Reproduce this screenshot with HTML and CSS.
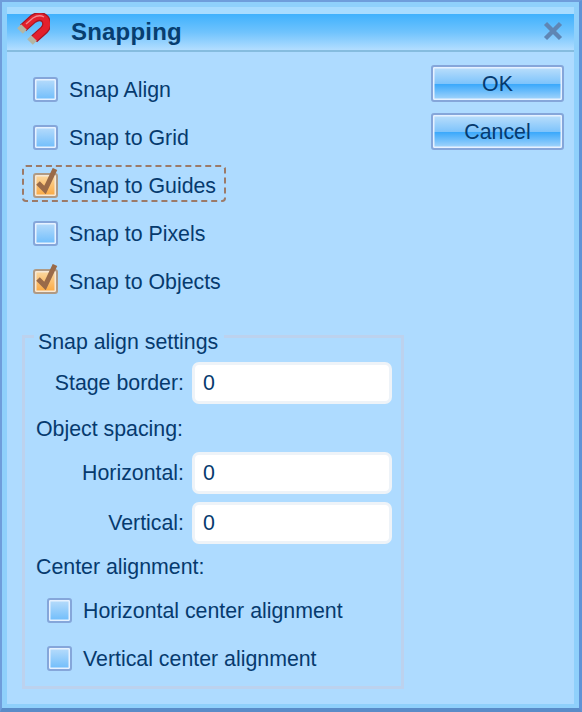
FILE: index.html
```html
<!DOCTYPE html>
<html lang="en">
<head>
<meta charset="utf-8">
<title>Snapping</title>
<link rel="stylesheet" href="styles.css">
</head>
<body>
<div class="window">
  <header class="titlebar">
    <svg class="magnet" width="34" height="34" viewBox="0 0 34 34">
      <path d="M7 15 L17 6 Q24 1 29 6 Q33 12 28 17 L18 26" fill="none" stroke="#a81522" stroke-width="9"/>
      <path d="M7 15 L17 6 Q24 1 29 6 Q33 12 28 17 L18 26" fill="none" stroke="#e3202c" stroke-width="6.5"/>
      <path d="M10 11 L17 5 Q23 1 28 4" fill="none" stroke="#ef8a90" stroke-width="1.4"/>
      <path d="M4 18 L8 14" stroke="#b3b6a4" stroke-width="8"/>
      <path d="M14 29 L18 25" stroke="#b3b6a4" stroke-width="8"/>
    </svg>
    <h1 class="title">Snapping</h1>
    <svg class="close" width="20" height="20" viewBox="0 0 20 20">
      <path d="M2.5 2.5 L17.5 17.5 M17.5 2.5 L2.5 17.5" stroke="#5f86b4" stroke-width="4.4"/>
    </svg>
  </header>
  <main class="body">
    <div class="top">
      <div class="checks">
        <label class="check"><span class="box"></span>Snap Align</label>
        <label class="check"><span class="box"></span>Snap to Grid</label>
        <label class="check focus"><span class="box on"><svg class="tick" width="22" height="26" viewBox="0 0 22 26"><path d="M2 15 L9 22 L19 1" fill="none" stroke="#9a6a48" stroke-width="5"/></svg></span>Snap to Guides</label>
        <label class="check"><span class="box"></span>Snap to Pixels</label>
        <label class="check"><span class="box on"><svg class="tick" width="22" height="26" viewBox="0 0 22 26"><path d="M2 15 L9 22 L19 1" fill="none" stroke="#9a6a48" stroke-width="5"/></svg></span>Snap to Objects</label>
      </div>
      <div class="buttons">
        <button class="btn" type="button">OK</button>
        <button class="btn" type="button">Cancel</button>
      </div>
    </div>
    <fieldset class="group">
      <legend class="legend">Snap align settings</legend>
      <div class="field first"><span class="label">Stage border:</span><input class="input" value="0"></div>
      <div class="heading">Object spacing:</div>
      <div class="field"><span class="label">Horizontal:</span><input class="input" value="0"></div>
      <div class="field last"><span class="label">Vertical:</span><input class="input" value="0"></div>
      <div class="heading center">Center alignment:</div>
      <label class="check sub"><span class="box"></span>Horizontal center alignment</label>
      <label class="check sub"><span class="box"></span>Vertical center alignment</label>
    </fieldset>
  </main>
</div>
</body>
</html>
```

FILE: styles.css
```css
* { box-sizing: border-box; }
html, body { margin: 0; height: 100%; }
body {
  width: 582px;
  height: 712px;
  overflow: hidden;
  font-family: "Liberation Sans", Arial, sans-serif;
  font-size: 21.33px;
  color: #063a6e;
  background: #aedbff;
}
.window {
  width: 582px;
  height: 712px;
  display: flex;
  flex-direction: column;
  border-style: solid;
  border-color: #6f9ddb #5f93d6 #5a8cc8 #6f9ddb;
  border-width: 2px 3px 4px 2px;
  padding: 0 5px 4px;
  background: #8fd0fb;
}
.titlebar {
  margin-top: 5px;
  height: 45px;
  flex: none;
  display: flex;
  align-items: center;
  border-top: 7px solid #a8dcff;
  border-bottom: 2px solid #85bcdf;
  background: linear-gradient(#3fb1fd, #6fc3fd 50%, #b3deff);
}
.magnet { margin: -4px 0 0 9px; flex: none; }
.title {
  margin: 0 0 0 21px;
  flex: 1;
  font-size: 24px;
  font-weight: bold;
  letter-spacing: 0.2px;
  color: #073e70;
}
.close { margin: -2px 11px 0 0; flex: none; }
.body {
  flex: 1;
  background: #aedbff;
  padding: 17px 10px 0 15px;
  display: flex;
  flex-direction: column;
}
.top { display: flex; justify-content: space-between; }
.checks { display: flex; flex-direction: column; }
.check {
  display: flex;
  align-items: center;
  height: 37px;
  margin-bottom: 11px;
  padding: 6px 0 0 11px;
  gap: 11px;
  width: fit-content;
}
.focus {
  outline: 2px dashed #9c7a68;
  outline-offset: -2px;
  border-radius: 4px;
  padding-right: 10px;
}
.box {
  width: 25px;
  height: 25px;
  flex: none;
  position: relative;
  margin-top: -2px;
  border: 2px solid #85a6da;
  border-radius: 3px;
  box-shadow: inset 0 0 0 1.5px #e6f1ff;
  background: linear-gradient(#b8dcfb, #6fbdfb);
}
.box.on {
  border-color: #b09a84;
  box-shadow: inset 0 0 0 1.5px #f6e8d6;
  background: linear-gradient(#fbd9a3, #fba83f);
}
.tick { position: absolute; left: 1px; top: -7px; }
.buttons { display: flex; flex-direction: column; gap: 11px; margin-top: -4px; }
.btn {
  width: 133px;
  height: 37px;
  padding: 2px 0 0;
  font: inherit;
  color: #063a6e;
  border: 2px solid #85a6da;
  border-radius: 3px;
  box-shadow: inset 0 0 0 1.5px #e6f1ff;
  background: linear-gradient(#bcdffb, #7fc4fb 50%, #3aa8fb 52%, #a7d6fb);
}
.group {
  flex: none;
  margin: 10px 0 0;
  padding: 8px 10px 0 12px;
  height: 370px;
  width: 382px;
  min-width: 0;
  border: 3px solid #bcd2ee;
}
.legend { padding: 12px 6px 0 4px; margin-left: -3px; line-height: 23px; }
.field { display: grid; grid-template-columns: 147px 200px; column-gap: 8px; align-items: center; height: 42px; margin-bottom: 8px; }
.field.first, .field.last { margin-bottom: 0; }
.label { text-align: right; }
.input {
  width: 200px;
  height: 42px;
  padding: 0 8px;
  font: inherit;
  color: #063a6e;
  background: #fff;
  border: 3px solid #eef3f8;
  border-radius: 7px;
  outline: none;
}
.heading { height: 48px; line-height: 50px; margin-left: -1px; }
.heading.center { height: 46px; line-height: 47px; }
.check.sub { margin: 0 0 11px; padding-left: 10px; }
```
